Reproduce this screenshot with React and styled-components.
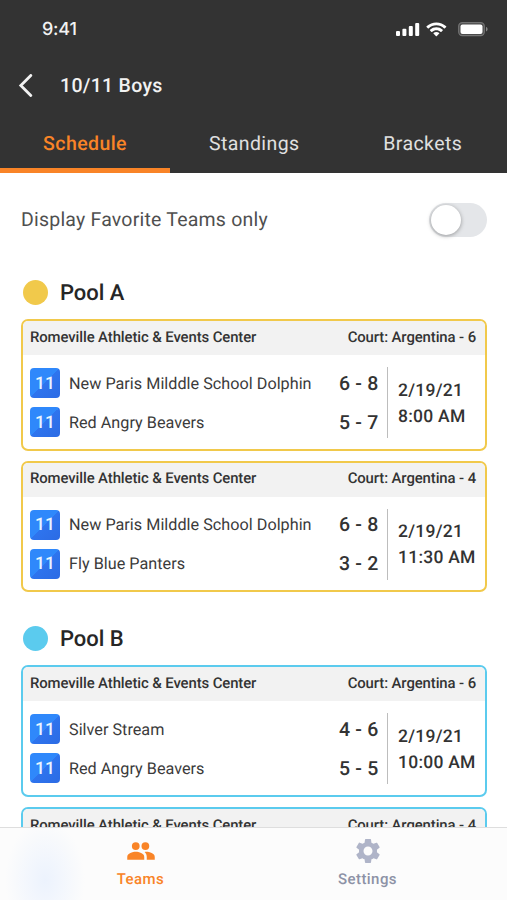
import React, { useState } from 'react';
import styled, { createGlobalStyle } from 'styled-components';

const GlobalStyle = createGlobalStyle`
  * {
    box-sizing: border-box;
  }
  body {
    margin: 0;
    background: #fff;
    font-family: Roboto, 'Liberation Sans', sans-serif;
    -webkit-font-smoothing: antialiased;
    text-rendering: geometricPrecision;
  }
  button {
    font: inherit;
    border: none;
    padding: 0;
    background: none;
    cursor: pointer;
    text-rendering: inherit;
  }
`;

const Screen = styled.div`
  height: 100vh;
  display: flex;
  flex-direction: column;
  overflow: hidden;
  background: #fff;
`;

const Header = styled.header`
  flex: none;
  height: 173px;
  display: flex;
  flex-direction: column;
  background: #333;
  color: #f2f2f2;
`;

const StatusBar = styled.div`
  height: 58px;
  display: flex;
  align-items: center;
  justify-content: space-between;
  padding: 0 18px 0 42px;
`;

const Clock = styled.span`
  font-family: Inter, 'Liberation Sans', sans-serif;
  font-size: 18px;
  font-weight: 500;
  letter-spacing: -0.25px;
`;

const StatusIcons = styled.svg`
  display: block;
  width: 94px;
  height: 18px;
`;

const TitleBar = styled.div`
  height: 55px;
  display: flex;
  align-items: center;
  padding-left: 18px;
`;

const BackButton = styled.button`
  width: 42px;
  height: 24px;
  color: #f2f2f2;

  svg {
    display: block;
  }
`;

const Title = styled.h1`
  margin: 0;
  font-size: 19.5px;
  line-height: 24px;
  font-weight: 500;
  letter-spacing: 0.3px;
`;

const Tabs = styled.nav`
  flex: 1;
  display: grid;
  grid-template-columns: 170px 1fr 1fr;
`;

const Tab = styled.button`
  color: ${({ $active }) => ($active ? '#f98427' : '#e0e0e0')};
  font-size: 19.5px;
  font-weight: ${({ $active }) => ($active ? 500 : 400)};
  letter-spacing: 0.42px;
  border-top: 5px solid transparent;
  border-bottom: 5px solid ${({ $active }) => ($active ? '#f98427' : 'transparent')};
`;

const Content = styled.main`
  flex: 1;
  min-height: 0;
  overflow: hidden;
  padding: 0 20px 0 21px;
`;

const FilterRow = styled.div`
  height: 93px;
  display: flex;
  align-items: center;
  justify-content: space-between;
  color: #4f4f4f;
  font-size: 19.5px;
  letter-spacing: 0.21px;
`;

const Switch = styled.button`
  width: 58px;
  height: 34px;
  padding: 1px 2px;
  display: flex;
  justify-content: ${({ $on }) => ($on ? 'flex-end' : 'flex-start')};
  align-items: center;
  border-radius: 17px;
  background: ${({ $on }) => ($on ? '#f98427' : '#e4e6e9')};
`;

const Knob = styled.span`
  width: 30px;
  height: 30px;
  border-radius: 50%;
  background: #fff;
  box-shadow: 0 1px 4px rgba(0, 0, 0, 0.35);
`;

const PoolSection = styled.section`
  margin-bottom: 20px;
`;

const PoolTitle = styled.h2`
  height: 53px;
  margin: 0;
  display: flex;
  align-items: center;
  gap: 12px;
  padding-left: 2px;
  color: #262626;
  font-size: 22px;
  line-height: 28px;
  font-weight: 500;
  letter-spacing: -0.05px;
`;

const PoolName = styled.span`
  padding-top: 2px;
`;

const Dot = styled.span`
  width: 25px;
  height: 25px;
  border-radius: 50%;
  background: ${({ $color }) => $color};
`;

const MatchList = styled.div`
  display: flex;
  flex-direction: column;
  gap: 10px;
`;

const MatchCard = styled.article`
  height: 131.6px;
  border: 2px solid ${({ $color }) => $color};
  border-radius: 7px;
  overflow: hidden;
  background: #fff;
`;

const MatchHeader = styled.div`
  height: 34px;
  display: flex;
  align-items: center;
  justify-content: space-between;
  padding: 0 9px 2.4px 7px;
  background: #f2f2f2;
  color: #333;
  font-size: 14.9px;
  font-weight: 500;
  letter-spacing: -0.1px;
`;

const MatchBody = styled.div`
  display: flex;
  padding: 12px 0 0 7px;
`;

const TeamRows = styled.div`
  flex: 1;
  display: flex;
  flex-direction: column;
  gap: 9px;
  padding-top: 1.3px;
`;

const TeamRow = styled.div`
  height: 30px;
  display: flex;
  align-items: center;
`;

const Badge = styled.span`
  width: 30px;
  height: 30px;
  display: flex;
  align-items: center;
  justify-content: center;
  padding-top: 1px;
  border-radius: 4px;
  background: linear-gradient(135deg, #2f88fb 50%, #2e74ee 50%, #2c6be4);
  color: #e8f4ff;
  font-size: 17.5px;
  font-weight: 500;
`;

const TeamName = styled.span`
  flex: 1;
  padding-left: 9px;
  color: #3b3b3b;
  font-size: 16.2px;
  letter-spacing: 0.02px;
`;

const Score = styled.span`
  width: 48px;
  color: #333;
  font-size: 19.5px;
  font-weight: 500;
  letter-spacing: 0.2px;
`;

const MatchTime = styled.div`
  width: 98px;
  height: 71px;
  padding: 2px 0 0 10px;
  border-left: 1px solid #bdbdbd;
  display: flex;
  flex-direction: column;
  justify-content: center;
  color: #333;
  font-size: 17.5px;
  line-height: 26px;
  font-weight: 500;
  letter-spacing: 0.25px;
`;

const BottomBar = styled.footer`
  flex: none;
  height: 73px;
  display: flex;
  justify-content: center;
  border-top: 1px solid #dedede;
  background:
    radial-gradient(ellipse 40px 60px at 45px 52px, rgba(220, 233, 255, 0.5), transparent),
    #fcfcfc;
`;

const NavItem = styled.button`
  width: 227px;
  display: flex;
  flex-direction: column;
  align-items: center;
  padding: 8px 0 0 1px;
  color: ${({ $active }) => ($active ? '#f98427' : '#8d92a6')};
  font-size: 15px;
  line-height: 18px;
  font-weight: 500;
  letter-spacing: 0.45px;

  svg {
    display: block;
    margin-bottom: 4px;
  }
`;

const YELLOW = '#f1c94b';
const BLUE = '#5bcbee';
const VENUE = 'Romeville Athletic & Events Center';

const pools = [
  {
    name: 'Pool A',
    color: YELLOW,
    matches: [
      {
        court: 'Argentina - 6',
        date: '2/19/21',
        time: '8:00 AM',
        teams: [
          { name: 'New Paris Milddle School Dolphin', score: '6 - 8' },
          { name: 'Red Angry Beavers', score: '5 - 7' },
        ],
      },
      {
        court: 'Argentina - 4',
        date: '2/19/21',
        time: '11:30 AM',
        teams: [
          { name: 'New Paris Milddle School Dolphin', score: '6 - 8' },
          { name: 'Fly Blue Panters', score: '3 - 2' },
        ],
      },
    ],
  },
  {
    name: 'Pool B',
    color: BLUE,
    matches: [
      {
        court: 'Argentina - 6',
        date: '2/19/21',
        time: '10:00 AM',
        teams: [
          { name: 'Silver Stream', score: '4 - 6' },
          { name: 'Red Angry Beavers', score: '5 - 5' },
        ],
      },
      {
        court: 'Argentina - 4',
        date: '',
        time: '',
        teams: [],
      },
    ],
  },
];

const PhoneStatus = () => (
  <StatusIcons viewBox="0 0 94 18" fill="#fff">
    <rect x="1" y="11" width="4" height="5" rx="1" />
    <rect x="7.4" y="8.7" width="4" height="7.3" rx="1" />
    <rect x="13.8" y="6" width="4" height="10" rx="1" />
    <rect x="20.2" y="3" width="4" height="13" rx="1" />
    <g transform="translate(31.4 2.4) scale(1.3)">
      <path d="M7.67 2.28C9.89 2.28 12.03 3.14 13.64 4.67C13.76 4.78 13.95 4.78 14.07 4.66L15.23 3.49C15.36 3.36 15.36 3.15 15.23 3.02C11.01-1.01 4.33-1.01.1 3.02C-.03 3.15-.03 3.36.1 3.49L1.26 4.66C1.38 4.78 1.57 4.78 1.69 4.67C3.3 3.14 5.44 2.28 7.67 2.28Z" />
      <path d="M7.67 6.08C8.89 6.08 10.07 6.53 10.97 7.35C11.09 7.47 11.28 7.47 11.41 7.35L12.56 6.18C12.7 6.05 12.69 5.85 12.56 5.72C9.8 3.17 5.53 3.17 2.77 5.72C2.64 5.85 2.63 6.05 2.77 6.18L3.92 7.35C4.05 7.47 4.24 7.47 4.36 7.35C5.26 6.53 6.44 6.08 7.67 6.08Z" />
      <path d="M9.89 8.63C10.02 8.51 10.02 8.3 9.88 8.19C8.6 7.11 6.73 7.11 5.45 8.19C5.31 8.3 5.31 8.51 5.44 8.63L7.44 10.65C7.56 10.77 7.77 10.77 7.89 10.65Z" />
    </g>
    <rect x="63.7" y="2.7" width="25.6" height="13" rx="3.6" fill="#4b4b4b" stroke="#747474" strokeWidth="1.2" />
    <rect x="65.5" y="4.5" width="22" height="9.4" rx="2" />
    <path d="M91 7V11.4C92 11 92.6 10.2 92.6 9.2S92 7.4 91 7Z" fill="#858585" />
  </StatusIcons>
);

const BackIcon = () => (
  <svg width="16" height="24" viewBox="0 0 16 24" fill="none" stroke="currentColor" strokeWidth="2.8" strokeLinecap="round">
    <path d="M12.8 1.4L2.8 11.5L12.8 21.6" />
  </svg>
);

const TeamsIcon = () => (
  <svg width="30" height="30" viewBox="0 0 24 24" fill="currentColor">
    <circle cx="7.8" cy="8" r="3.1" />
    <circle cx="15.5" cy="8" r="3.1" />
    <path d="M7.8 12.6c-2.5 0-6.8 1.2-6.8 4.1v2.2h13.6v-2.2c0-2.9-4.3-4.1-6.8-4.1z" />
    <path d="M16.3 12.6c-.5 0-.9.1-1.4.2 1 .9 1.7 2.2 1.7 3.9v2.2h6.4v-2.2c0-2.9-4.2-4.1-6.7-4.1z" />
  </svg>
);

const SettingsIcon = () => (
  <svg width="30" height="30" viewBox="0 0 24 24" fill="#afb4c8">
    <path d="M19.14 12.94c.04-.3.06-.61.06-.94 0-.32-.02-.64-.07-.94l2.03-1.58c.18-.14.23-.41.12-.61l-1.92-3.32c-.12-.22-.37-.29-.59-.22l-2.39.96c-.5-.38-1.03-.7-1.62-.94l-.36-2.54c-.04-.24-.24-.41-.48-.41h-3.84c-.24 0-.43.17-.47.41l-.36 2.54c-.59.24-1.13.57-1.62.94l-2.39-.96c-.22-.08-.47 0-.59.22L2.74 8.87c-.12.21-.08.47.12.61l2.03 1.58c-.05.3-.09.63-.09.94s.02.64.07.94l-2.03 1.58c-.18.14-.23.41-.12.61l1.92 3.32c.12.22.37.29.59.22l2.39-.96c.5.38 1.03.7 1.62.94l.36 2.54c.05.24.24.41.48.41h3.84c.24 0 .44-.17.47-.41l.36-2.54c.59-.24 1.13-.56 1.62-.94l2.39.96c.22.08.47 0 .59-.22l1.92-3.32c.12-.22.07-.47-.12-.61l-2.01-1.58zM12 15.6c-1.98 0-3.6-1.62-3.6-3.6s1.62-3.6 3.6-3.6 3.6 1.62 3.6 3.6-1.62 3.6-3.6 3.6z" />
  </svg>
);

const Match = ({ match, color }) => (
  <MatchCard $color={color}>
    <MatchHeader>
      <span>{VENUE}</span>
      <span>Court: {match.court}</span>
    </MatchHeader>
    <MatchBody>
      <TeamRows>
        {match.teams.map((team) => (
          <TeamRow key={team.name}>
            <Badge>11</Badge>
            <TeamName>{team.name}</TeamName>
            <Score>{team.score}</Score>
          </TeamRow>
        ))}
      </TeamRows>
      <MatchTime>
        <span>{match.date}</span>
        <span>{match.time}</span>
      </MatchTime>
    </MatchBody>
  </MatchCard>
);

const App = () => {
  const [tab, setTab] = useState('Schedule');
  const [favoritesOnly, setFavoritesOnly] = useState(false);

  return (
    <>
      <GlobalStyle />
      <Screen>
        <Header>
          <StatusBar>
            <Clock>9:41</Clock>
            <PhoneStatus />
          </StatusBar>
          <TitleBar>
            <BackButton type="button">
              <BackIcon />
            </BackButton>
            <Title>10/11 Boys</Title>
          </TitleBar>
          <Tabs>
            {['Schedule', 'Standings', 'Brackets'].map((name) => (
              <Tab key={name} type="button" $active={tab === name} onClick={() => setTab(name)}>
                {name}
              </Tab>
            ))}
          </Tabs>
        </Header>
        <Content>
          <FilterRow>
            <span>Display Favorite Teams only</span>
            <Switch
              type="button"
              role="switch"
              aria-checked={favoritesOnly}
              $on={favoritesOnly}
              onClick={() => setFavoritesOnly(!favoritesOnly)}
            >
              <Knob />
            </Switch>
          </FilterRow>
          {pools.map((pool) => (
            <PoolSection key={pool.name}>
              <PoolTitle>
                <Dot $color={pool.color} />
                <PoolName>{pool.name}</PoolName>
              </PoolTitle>
              <MatchList>
                {pool.matches.map((match) => (
                  <Match key={match.court} match={match} color={pool.color} />
                ))}
              </MatchList>
            </PoolSection>
          ))}
        </Content>
        <BottomBar>
          <NavItem type="button" $active>
            <TeamsIcon />
            Teams
          </NavItem>
          <NavItem type="button">
            <SettingsIcon />
            Settings
          </NavItem>
        </BottomBar>
      </Screen>
    </>
  );
};

export default App;
